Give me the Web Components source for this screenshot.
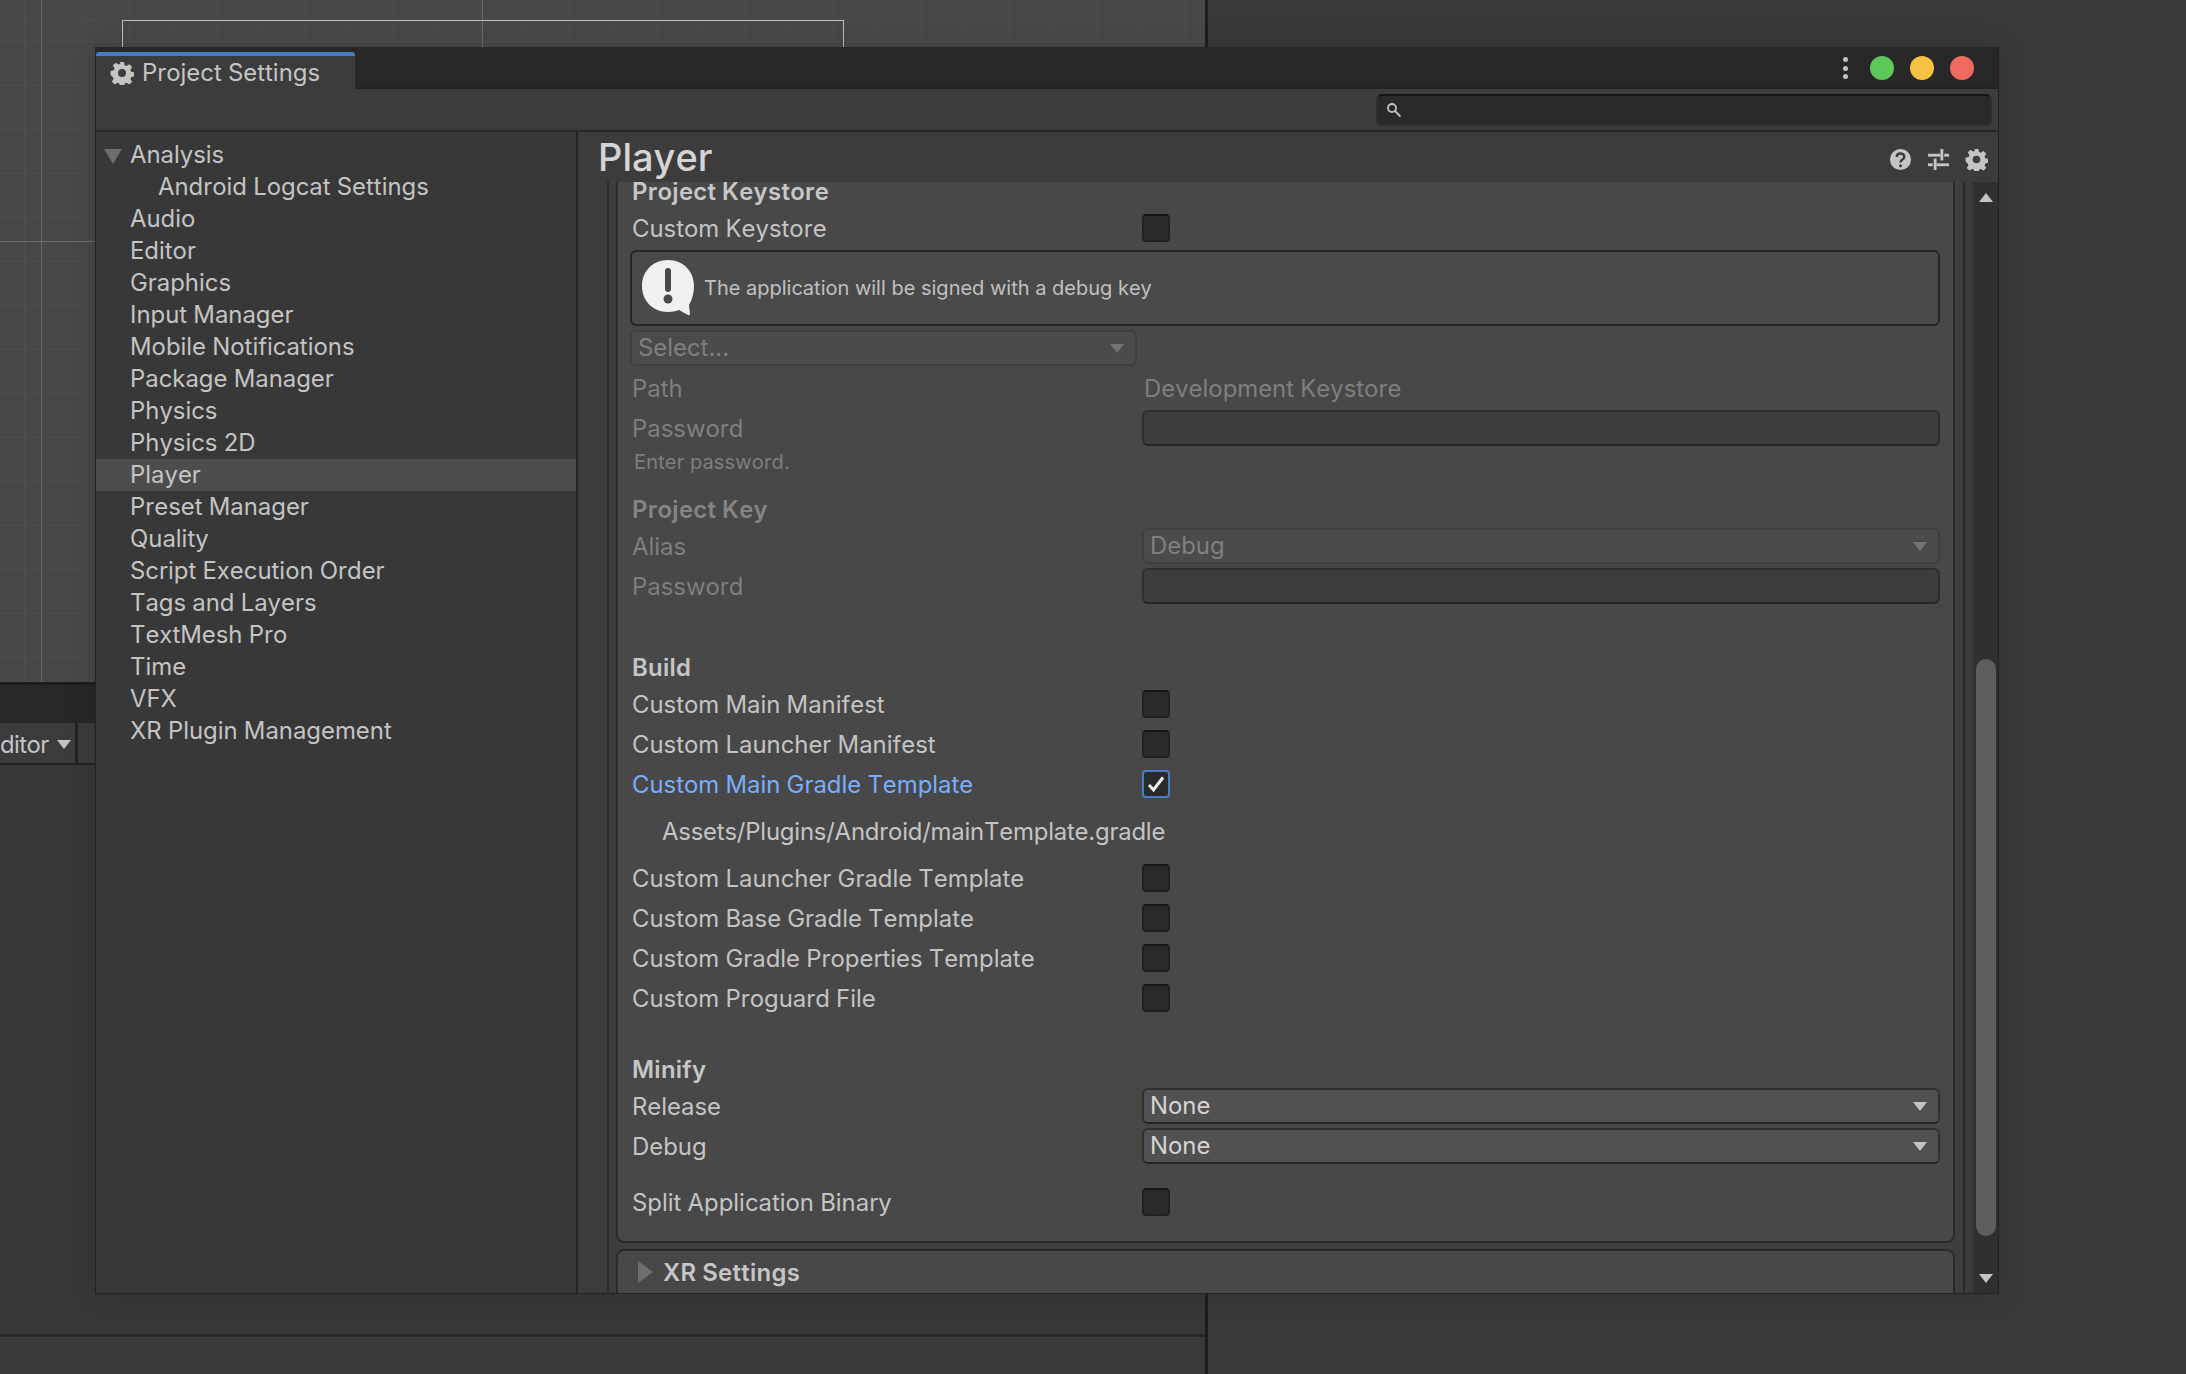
<!DOCTYPE html>
<html>
<head>
<meta charset="utf-8">
<title>Project Settings</title>
<style>
  html, body { margin: 0; height: 100%; background: #3a3a3a; overflow: hidden; }
  body { font-family: Inter, "Noto Sans", sans-serif; font-kerning: none; word-spacing: -.5px; }
</style>
</head>
<body>
<ps-desktop>
  <ps-window>
    <ps-sidebar>
      <ps-item open>Analysis</ps-item>
      <ps-item sub>Android Logcat Settings</ps-item>
      <ps-item>Audio</ps-item>
      <ps-item>Editor</ps-item>
      <ps-item>Graphics</ps-item>
      <ps-item>Input Manager</ps-item>
      <ps-item>Mobile Notifications</ps-item>
      <ps-item>Package Manager</ps-item>
      <ps-item>Physics</ps-item>
      <ps-item>Physics 2D</ps-item>
      <ps-item selected>Player</ps-item>
      <ps-item>Preset Manager</ps-item>
      <ps-item>Quality</ps-item>
      <ps-item>Script Execution Order</ps-item>
      <ps-item>Tags and Layers</ps-item>
      <ps-item>TextMesh Pro</ps-item>
      <ps-item>Time</ps-item>
      <ps-item>VFX</ps-item>
      <ps-item>XR Plugin Management</ps-item>
    </ps-sidebar>
    <ps-inspector title-text="Player">
      <ps-panel>
        <ps-heading style="height:20px">Project Keystore</ps-heading>
        <ps-row h="32" mt="10" label="Custom Keystore"><ps-check></ps-check></ps-row>
        <ps-help>The application will be signed with a debug key</ps-help>
        <ps-popup disabled style="width:507px;margin:4px 0 0 -2px">Select...</ps-popup>
        <ps-row h="32" mt="6" disabled label="Path"><span style="padding-left:2px">Development Keystore</span></ps-row>
        <ps-row h="36" mt="6" disabled label="Password"><ps-input></ps-input></ps-row>
        <ps-note>Enter password.</ps-note>
        <ps-heading disabled style="margin-top:22px">Project Key</ps-heading>
        <ps-row h="36" mt="4" disabled label="Alias"><ps-popup disabled>Debug</ps-popup></ps-row>
        <ps-row h="36" mt="4" disabled label="Password"><ps-input></ps-input></ps-row>
        <ps-heading style="margin-top:50px">Build</ps-heading>
        <ps-row h="40" mt="2" label="Custom Main Manifest"><ps-check></ps-check></ps-row>
        <ps-row h="40" label="Custom Launcher Manifest"><ps-check></ps-check></ps-row>
        <ps-row h="40" accent label="Custom Main Gradle Template"><ps-check checked></ps-check></ps-row>
        <ps-path>Assets/Plugins/Android/mainTemplate.gradle</ps-path>
        <ps-row h="40" label="Custom Launcher Gradle Template"><ps-check></ps-check></ps-row>
        <ps-row h="40" label="Custom Base Gradle Template"><ps-check></ps-check></ps-row>
        <ps-row h="40" label="Custom Gradle Properties Template"><ps-check></ps-check></ps-row>
        <ps-row h="40" label="Custom Proguard File"><ps-check></ps-check></ps-row>
        <ps-heading style="margin-top:38px">Minify</ps-heading>
        <ps-row h="36" mt="4" label="Release"><ps-popup>None</ps-popup></ps-row>
        <ps-row h="36" mt="4" label="Debug"><ps-popup>None</ps-popup></ps-row>
        <ps-row h="40" mt="18" label="Split Application Binary"><ps-check></ps-check></ps-row>
      </ps-panel>
      <ps-foldout>XR Settings</ps-foldout>
    </ps-inspector>
  </ps-window>
</ps-desktop>

<script>
function make(name, css, html, setup) {
  const tpl = document.createElement('template');
  tpl.innerHTML = '<style>' + css + '</style>' + html;
  customElements.define(name, class extends HTMLElement {
    constructor() {
      super();
      this.attachShadow({ mode: 'open' }).appendChild(tpl.content.cloneNode(true));
    }
    connectedCallback() {
      if (setup) setup(this, this.shadowRoot);
    }
  });
}

const gear = (size) => `<svg width="${size}" height="${size}" viewBox="0 0 24 24"><path fill="#c4c4c4" fill-rule="evenodd" d="M10 1h4l.7 3.2 1.9.8 2.8-1.8 2.8 2.8-1.8 2.8.8 1.9 3.2.7v4l-3.2.7-.8 1.9 1.8 2.8-2.8 2.8-2.8-1.8-1.9.8-.7 3.2h-4l-.7-3.2-1.9-.8-2.8 1.8-2.8-2.8 1.8-2.8-.8-1.9L.6 14v-4l3.2-.7.8-1.9L2.8 4.6l2.8-2.8 2.8 1.8 1.9-.8zM12 8a4 4 0 1 0 0 8 4 4 0 0 0 0-8z"/></svg>`;

make('ps-desktop', `
  :host { display: grid; grid-template-columns: 1208px 1fr; width: 2186px; height: 1374px; position: relative; }
  .left { display: flex; flex-direction: column; border-right: 3px solid #1d1d1d; }
  .scene {
    height: 682px; position: relative; flex: none; background-color: #484848;
    background-image:
      linear-gradient(#6a6a6a,#6a6a6a), linear-gradient(#6a6a6a,#6a6a6a), linear-gradient(#6a6a6a,#6a6a6a),
      repeating-linear-gradient(90deg, #4e4e4e 0 1px, transparent 1px 44px),
      repeating-linear-gradient(0deg, #4e4e4e 0 1px, transparent 1px 44px);
    background-size: 1px 100%, 1px 100%, 100% 1px, auto, auto;
    background-position: 41px 0, 482px 0, 0 241px, 41px 0, 0 20px;
    background-repeat: no-repeat, no-repeat, no-repeat, repeat, repeat;
  }
  .rect { position: absolute; left: 122px; top: 20px; width: 720px; height: 60px; border: 1px solid #bdbdbd; border-bottom: 0; }
  .band { height: 38px; background: #282828; border-top: 3px solid #1e1e1e; flex: none; }
  .bar { height: 40px; background: #3c3c3c; border-bottom: 2px solid #232323; display: flex; align-items: center; flex: none; color: #c4c4c4; font-size: 23.9px; }
  .cell { height: 100%; border-right: 3px solid #232323; display: flex; align-items: center; padding-top: 2px; box-sizing: border-box; flex: none; width: 78px; }
  .cell span { letter-spacing: -.6px; }
  .tri { width: 0; height: 0; border: 7px solid transparent; border-top: 9px solid #c4c4c4; border-bottom: 0; margin-left: 8px; }
  .fill { flex: 1; background: #383838; }
  .bottom { height: 37px; flex: none; background: #3a3a3a; border-top: 3px solid #282828; }
  .right { background: #3a3a3a; }
`, `
  <div class="left">
    <div class="scene"><div class="rect"></div></div>
    <div class="band"></div>
    <div class="bar"><div class="cell"><span>ditor</span><i class="tri"></i></div></div>
    <div class="fill"></div>
    <div class="bottom"></div>
  </div>
  <div class="right"></div>
  <slot></slot>
`);

make('ps-window', `
  :host {
    position: absolute; left: 95px; top: 47px; width: 1904px; height: 1247px; box-sizing: border-box;
    display: flex; flex-direction: column; background: #3c3c3c; border: 1px solid #232323; border-top: 0;
    box-shadow: 0 0 30px rgba(0,0,0,.15); overflow: hidden; color: #c4c4c4; font-size: 23.9px;
  }
  .tabs { height: 42px; flex: none; background: #282828; display: flex; justify-content: space-between; border-bottom: 2px solid #222; box-sizing: border-box; }
  .tab { width: 259px; margin-top: 5px; background: #3c3c3c; border-top: 4px solid #4a7cc0; border-radius: 3px 3px 0 0; margin-bottom: -2px; display: flex; align-items: center; gap: 8px; padding-left: 14px; box-sizing: border-box; }
  .actions { display: flex; align-items: center; padding: 2px 24px 0 0; }
  .dots { width: 6px; height: 22px; margin-right: 5px; display: flex; flex-direction: column; justify-content: space-between; }
  .dots i { width: 5px; height: 5px; border-radius: 50%; background: #c4c4c4; }
  .dot { width: 24px; height: 24px; border-radius: 50%; margin-left: 16px; }
  .tools { flex: none; box-sizing: border-box; display: flex; justify-content: flex-end; align-items: center; padding-right: 6px; border-bottom: 2px solid #282828; height: 43px; }
  .search { width: 616px; height: 32px; box-sizing: border-box; background: #2a2a2a; border: 2px solid #303030; border-top-color: #141414; border-radius: 6px; display: flex; align-items: center; padding-left: 8px; }
  .body { flex: 1; display: flex; min-height: 0; }
`, `
  <div class="tabs">
    <div class="tab">${gear(24)}<span>Project Settings</span></div>
    <div class="actions">
      <div class="dots"><i></i><i></i><i></i></div>
      <div class="dot" style="background:#5cc85a"></div>
      <div class="dot" style="background:#f5c242"></div>
      <div class="dot" style="background:#ef6b5f"></div>
    </div>
  </div>
  <div class="tools">
    <div class="search"><svg width="16" height="16" viewBox="0 0 16 16" fill="none" stroke="#c4c4c4" stroke-width="1.8"><circle cx="6" cy="6" r="4"/><path d="M9 9l5.5 5.5"/></svg></div>
  </div>
  <div class="body"><slot></slot></div>
`);

make('ps-sidebar', `
  :host { display: block; flex: none; width: 482px; box-sizing: border-box; background: #383838; border-right: 2px solid #232323; padding-top: 7px; }
`, `<slot></slot>`);

make('ps-item', `
  :host { display: flex; align-items: center; height: 32px; box-sizing: border-box; padding: 0 0 2px 34px; position: relative; white-space: nowrap; }
  :host([sub]) { padding-left: 62px; }
  :host([selected]) { background: #4d4d4d; }
  .tri { display: none; position: absolute; left: 8px; top: 10px; width: 0; height: 0; border: 9px solid transparent; border-top: 15px solid #6e6e6e; border-bottom: 0; }
  :host([open]) .tri { display: block; }
`, `<i class="tri"></i><slot></slot>`);

make('ps-inspector', `
  :host { flex: 1; display: flex; flex-direction: column; min-width: 0; }
  header { height: 50px; flex: none; display: flex; align-items: center; justify-content: space-between; padding: 0 10px 0 20px; }
  h1 { margin: 0; font-size: 38px; font-weight: 500; color: #d4d4d4; }
  .icons { display: flex; gap: 15px; align-items: center; margin-top: 4px; }
  .wrap { flex: 1; display: flex; min-height: 0; }
  .col { width: 29px; flex: none; }
  .main { flex: 1; min-width: 0; background: #3e3e3e; overflow: hidden; padding: 0 8px 0 7px; border-left: 2px solid #2a2a2a; border-right: 2px solid #2a2a2a; }
  .edge { width: 7px; flex: none; background: #3c3c3c; }
  .track { width: 26px; flex: none; background: #303030; position: relative; border-left: 1px solid #3a3a3a; box-sizing: border-box; }
  .thumb { position: absolute; left: 3px; top: 477px; width: 20px; height: 577px; border-radius: 10px; background: #5e5e5e; }
  .up, .down { position: absolute; left: 6px; width: 0; height: 0; border: 7px solid transparent; }
  .up { top: 11px; border-bottom: 9px solid #c4c4c4; border-top: 0; }
  .down { bottom: 10px; border-top: 9px solid #c4c4c4; border-bottom: 0; }
`, `
  <header>
    <h1></h1>
    <div class="icons">
      <svg width="23" height="23" viewBox="0 0 24 24"><circle cx="12" cy="12" r="11" fill="#c4c4c4"/><path d="M8 9.5c0-5 8-5 8-.5 0 3-4 3-4 6" fill="none" stroke="#3c3c3c" stroke-width="2.5"/><circle cx="12" cy="18.5" r="1.6" fill="#3c3c3c"/></svg>
      <svg width="23" height="23" viewBox="0 0 24 24" fill="#c4c4c4"><rect x="1" y="6" width="13" height="3"/><rect x="18" y="6" width="5" height="3"/><rect x="14" y="1" width="3" height="12"/><rect x="1" y="16" width="5" height="3"/><rect x="10" y="16" width="13" height="3"/><rect x="7" y="11" width="3" height="12"/></svg>
      ${gear(23)}
    </div>
  </header>
  <div class="wrap">
    <div class="col"></div>
    <div class="main"><slot></slot></div>
    <div class="edge"></div>
    <div class="track"><i class="up"></i><div class="thumb"></div><i class="down"></i></div>
  </div>
`, (el, root) => { root.querySelector('h1').textContent = el.getAttribute('title-text'); });

make('ps-panel', `
  :host { display: block; background: #484848; border: 2px solid #2a2a2a; border-top: 0; border-radius: 0 0 8px 8px; padding: 0 13px 19px 14px; }
`, `<slot></slot>`);

make('ps-heading', `
  :host { display: flex; align-items: center; height: 28px; box-sizing: border-box; padding-bottom: 2px; font-weight: 600; letter-spacing: .3px; color: #c6c6c6; white-space: nowrap; }
  :host([disabled]) { color: #858585; }
`, `<slot></slot>`);

make('ps-row', `
  :host { display: grid; grid-template-columns: 510px 1fr; align-items: center; color: #c4c4c4; white-space: nowrap; }
  :host([disabled]) { color: #7f7f7f; }
  :host([accent]) .label { color: #7baefa; }
`, `<div class="label"></div><div class="value"><slot></slot></div>`, (el, root) => {
  root.querySelector('.label').textContent = el.getAttribute('label');
  el.style.height = el.getAttribute('h') + 'px';
  el.style.marginTop = (el.getAttribute('mt') || 0) + 'px';
});

make('ps-check', `
  :host { display: flex; align-items: center; justify-content: center; width: 28px; height: 28px; box-sizing: border-box; background: #2a2a2a; border: 2px solid #212121; border-top-color: #151515; border-radius: 4px; }
  :host([checked]) { border-color: #4a7cc0; }
  svg { display: none; }
  :host([checked]) svg { display: block; }
`, `<svg width="22" height="22" viewBox="0 0 22 22" fill="none" stroke="#f0f0f0" stroke-width="3"><path d="M4 12l4.5 5L18 4.5"/></svg>`);

make('ps-help', `
  :host { display: flex; align-items: center; height: 76px; margin: 6px 0 0 -2px; box-sizing: border-box; background: #4a4a4a; border: 2px solid #262626; border-radius: 6px; padding-left: 9px; gap: 9px; color: #c0c0c0; font-size: 20px; word-spacing: 0; white-space: nowrap; }
`, `<svg width="54" height="58" viewBox="0 0 54 58" style="flex:none"><path fill="#f0f0f0" d="M27 1C12 1 1 12 1 27s11 26 26 26c4 0 8-1 11-2l9 5c1 .5 2 0 2-1l-1-9c3-5 5-12 5-19C53 12 42 1 27 1z"/><rect x="24" y="9" width="6" height="24" rx="3" fill="#484848"/><circle cx="27" cy="40" r="4.5" fill="#484848"/></svg><span><slot></slot></span>`);

make('ps-popup', `
  :host { display: flex; align-items: center; justify-content: space-between; height: 36px; box-sizing: border-box; background: #515151; border: 2px solid #303030; border-bottom-color: #242424; border-radius: 6px; padding: 0 11px 0 6px; color: #d4d4d4; }
  :host([disabled]) { background: #4b4b4b; border-color: #3f3f3f; color: #808080; }
  span { position: relative; top: -1px; }
  i { width: 0; height: 0; border: 7px solid transparent; border-top: 9px solid #c4c4c4; border-bottom: 0; }
  :host([disabled]) i { border-top-color: #747474; }
`, `<span><slot></slot></span><i></i>`);

make('ps-input', `
  :host { display: block; height: 36px; box-sizing: border-box; background: #3d3d3d; border: 2px solid #2e2e2e; border-bottom-color: #262626; border-radius: 6px; }
`, ``);

make('ps-note', `
  :host { display: flex; align-items: center; height: 24px; margin: 4px 0 0 2px; color: #7f7f7f; font-size: 20px; letter-spacing: .15px; word-spacing: 0; }
`, `<slot></slot>`);

make('ps-path', `
  :host { display: flex; align-items: center; height: 54px; padding-left: 30px; color: #c4c4c4; letter-spacing: -.2px; white-space: nowrap; }
`, `<slot></slot>`);

make('ps-foldout', `
  :host { display: flex; align-items: center; height: 60px; margin-top: 6px; background: #484848; border: 2px solid #2a2a2a; border-radius: 8px 8px 0 0; padding: 0 0 14px 20px; gap: 10px; font-weight: 600; letter-spacing: .3px; color: #c6c6c6; box-sizing: border-box; }
  i { width: 0; height: 0; border: 11px solid transparent; border-left: 15px solid #6e6e6e; border-right: 0; }
`, `<i></i><slot></slot>`);
</script>
</body>
</html>
